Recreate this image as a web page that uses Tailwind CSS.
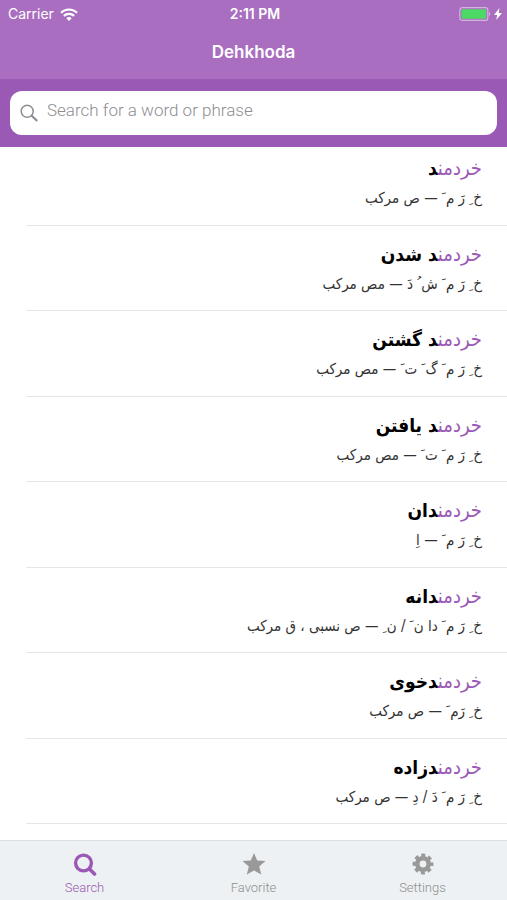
<!DOCTYPE html>
<html lang="en">
<head>
  <meta charset="UTF-8" />
  <meta name="viewport" content="width=device-width, initial-scale=1.0"/>
  <title>Dehkhoda</title>
  <script src="https://cdn.jsdelivr.net/npm/@tailwindcss/browser@4"></script>
</head>
<body class="flex flex-col h-screen overflow-hidden bg-white font-['Roboto','DejaVu_Sans',sans-serif]">
  <!-- Header -->
  <header class="shrink-0 bg-[#a96ebf] text-white font-['Inter',sans-serif]">
    <!-- Status bar -->
    <div class="grid grid-cols-3 items-center h-7 pl-2 pr-[5px] text-sm">
      <div class="flex items-center gap-1.5">
        <span>Carrier</span>
        <svg class="w-[18px] h-[13px]" viewBox="0 0 18 13" fill="none" stroke="currentColor" stroke-width="2.2">
          <path d="M1 4.8a11.4 11.4 0 0 1 16 0"/>
          <path d="M3.9 7.9a7.2 7.2 0 0 1 10.200 0"/>
          <path d="M9 13L6.300 10.300a3.800 3.800 0 0 1 5.400 0z" fill="currentColor" stroke="none"/>
        </svg>
      </div>
      <span class="text-center font-semibold">2:11 PM</span>
      <div class="flex items-center justify-end gap-[3px]">
        <svg class="w-8 h-[14px]" viewBox="0 0 32 14" fill="none">
          <rect x=".8" y=".6" width="28" height="12.800" rx="2.500" stroke="#d3b4df" stroke-width="1.200"/>
          <rect x="2.500" y="2.300" width="24.600" height="9.400" rx="1" fill="#4cd964"/>
          <path d="M30 5v4a2.300 2.300 0 0 0 0-4z" fill="#d3b4df"/>
        </svg>
        <svg class="w-2 h-3" viewBox="0 0 8 12" fill="currentColor"><path d="M5.500 0L0 7h3.200L2.200 12 8 4.900H4.700z"/></svg>
      </div>
    </div>
    <h1 class="h-[51px] pt-3 text-center text-[17px] leading-6 font-semibold">Dehkhoda</h1>
  </header>

  <!-- Search -->
  <form class="shrink-0 bg-[#9b59b6] px-[10px] py-3" role="search">
    <label for="search" class="flex items-center h-11 rounded-xl bg-white pl-[10px] pr-3 gap-2">
      <svg class="w-[19px] h-[19px] shrink-0" viewBox="0 0 19 19" fill="none" stroke="#8e8e93">
        <circle cx="7.200" cy="7.200" r="6" stroke-width="1.500"/>
        <path d="M11.500 11.500l5.700 5.500" stroke-width="2.200"/>
      </svg>
      <input id="search" type="search" placeholder="Search for a word or phrase" aria-label="Search"
        class="w-full pb-1 text-[17px] font-light outline-none placeholder:text-[#8e8e93]"/>
    </label>
  </form>

  <!-- Results -->
  <main class="flex-grow overflow-hidden">
    <ul id="results" dir="rtl" lang="fa" class="-mt-[7px] ml-[26px] font-['DejaVu_Sans_Condensed','DejaVu_Sans',sans-serif]"></ul>
  </main>

  <!-- Tabs -->
  <nav class="shrink-0 grid grid-cols-3 h-[60px] border-t border-[#d9dedf] bg-[#edf1f3] text-[13px] leading-4 font-light text-[#8f8f8f]">
    <a href="#search" class="flex flex-col items-center gap-[3px] pt-3 text-[#9b59b6]">
      <svg class="w-6 h-6" viewBox="0 0 24 24" fill="none" stroke="currentColor" stroke-linecap="round">
        <circle cx="10.500" cy="10" r="7.900" stroke-width="3.400"/>
        <path d="M16.500 16l5 5" stroke-width="3.600"/>
      </svg>
      Search
    </a>
    <a href="#favorite" class="flex flex-col items-center gap-[3px] pt-3">
      <svg class="w-6 h-6" viewBox="0 0 24 24" fill="#999">
        <path d="M12 0l3.200 7.500 8.300.6-6.300 5.400 2.100 8L12 17.500l-7.200 4.000 2.100-8L.5 8.100l8.300-.6z"/>
      </svg>
      Favorite
    </a>
    <a href="#settings" class="flex flex-col items-center gap-[3px] pt-3">
      <svg class="w-6 h-6" viewBox="0 0 24 24">
        <g fill="none" stroke="#999">
          <circle cx="12" cy="11" r="5.700" stroke-width="4.600"/>
          <circle cx="12" cy="11" r="8.700" stroke-width="3.400" stroke-dasharray="3.900 2.933" stroke-dashoffset="1.950"/>
        </g>
      </svg>
      Settings
    </a>
  </nav>

  <script>
    const match = 'خردمن';
    const results = [
      { rest: 'د', info: 'خ ِ رَ م َ — ص مرکب' },
      { rest: 'د شدن', info: 'خ ِ رَ م َ ش ُ دَ — مص مرکب' },
      { rest: 'د گشتن', info: 'خ ِ رَ م َ گ َ ت َ — مص مرکب' },
      { rest: 'د یافتن', info: 'خ ِ رَ م َ ت َ — مص مرکب' },
      { rest: 'دان', info: 'خ ِ رَ م َ — اِ' },
      { rest: 'دانه', info: 'خ ِ رَ م َ دا ن َ / ن ِ — ص نسبی ، ق مرکب' },
      { rest: 'دخوی', info: 'خ ِ رَم َ — ص مرکب' },
      { rest: 'دزاده', info: 'خ ِ رَ م َ دَ / دِ — ص مرکب' }
    ];

    const list = document.getElementById('results');
    results.forEach(result => {
      const item = document.createElement('li');
      item.className = 'h-[86px] even:h-[85px] pt-3 pr-[25px] border-b border-[#e6e6e6]';
      item.innerHTML = `
        <h2 class="text-[19px] leading-8 font-bold text-black"><span class="text-xl leading-8 font-normal text-[#9b59b6]">${match}</span>${result.rest}</h2>
        <p class="text-[15px] leading-7 text-[#333]">${result.info}</p>
      `;
      list.appendChild(item);
    });
  </script>
</body>
</html>
